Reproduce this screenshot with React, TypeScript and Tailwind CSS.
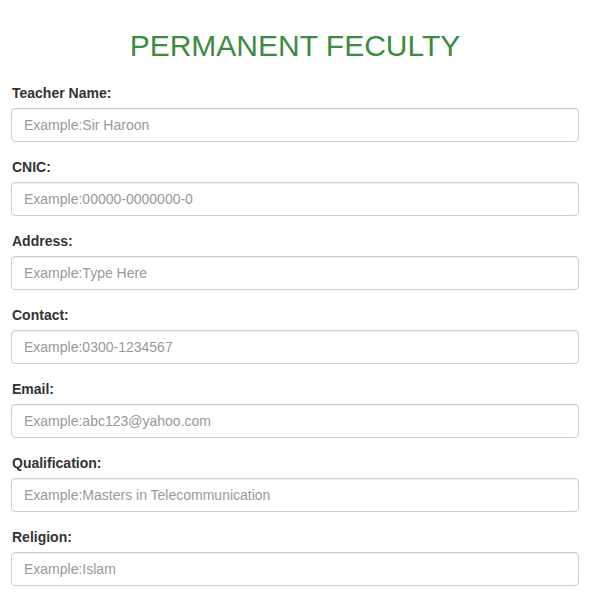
import React from "react";

const fields = [
  { label: "Teacher Name:", ph: "Example:Sir Haroon" },
  { label: "CNIC:", ph: "Example:00000-0000000-0" },
  { label: "Address:", ph: "Example:Type Here" },
  { label: "Contact:", ph: "Example:0300-1234567" },
  { label: "Email:", ph: "Example:abc123@yahoo.com" },
  { label: "Qualification:", ph: "Example:Masters in Telecommunication" },
  { label: "Religion:", ph: "Example:Islam" },
];

export default function App() {
  return (
    <div className="min-h-[596px] bg-white text-[#333] [font-family:'Liberation_Sans',Arial,sans-serif]">
      <div className="pl-[11px] pr-[13px] pt-[29px]">
        <h2 className="text-center text-[30px] leading-[33px] font-normal text-[#3d8b3f] mb-[21px]">
          PERMANENT FECULTY
        </h2>
        <form>
          {fields.map((f) => (
            <div key={f.label} className="mb-[15px]">
              <label className="block pl-[1px] text-[14px] leading-[20px] font-bold mb-[5px]">
                {f.label}
              </label>
              <input
                type="text"
                placeholder={f.ph}
                className="block w-full h-[34px] px-[12px] py-[6px] text-[14px] leading-[20px] text-[#555] bg-white border border-[#ccc] rounded-[4px] shadow-[inset_0_1px_1px_rgba(0,0,0,0.075)] placeholder:text-[#999] outline-none"
              />
            </div>
          ))}
        </form>
      </div>
    </div>
  );
}
